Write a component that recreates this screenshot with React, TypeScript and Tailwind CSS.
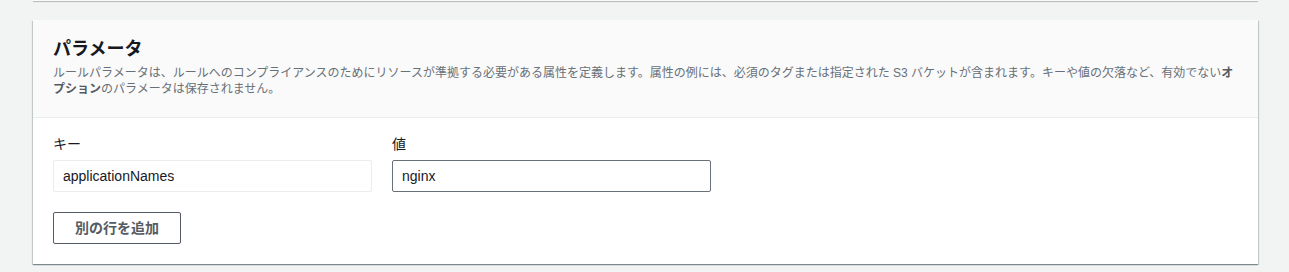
const font = "font-['Liberation_Sans','Noto_Sans_CJK_JP',sans-serif]";

function Field({
  label,
  value,
  strong,
}: {
  label: string;
  value: string;
  strong?: boolean;
}) {
  return (
    <div className="flex w-[319px] flex-col">
      <label className="text-[14px] leading-[22px] text-[#16191f]">{label}</label>
      <input
        readOnly
        value={value}
        className={`mt-[5px] h-8 w-full rounded-[2px] border bg-white px-[9px] text-[14px] text-[#16191f] outline-none ${
          strong ? "border-[#687078]" : "border-[#eaeded]"
        }`}
      />
    </div>
  );
}

export default function App() {
  return (
    <div className={`min-h-[272px] bg-[#f2f3f3] pl-[33px] pr-[31px] ${font}`}>
      <div className="h-px bg-[#fafafa] shadow-[0_1px_1px_0_rgba(0,28,36,0.3)]" />

      <section className="mt-[19px] bg-white shadow-[0_1px_1px_0_rgba(0,28,36,0.3),1px_1px_1px_0_rgba(0,28,36,0.15),-1px_1px_1px_0_rgba(0,28,36,0.15)]">
        <div className="border-b border-[#eaeded] bg-[#fafafa] px-5 pb-5 pt-[18px]">
          <h2 className="text-[18px] font-bold leading-[22px] text-[#16191f]">
            パラメータ
          </h2>
          <p className="mt-[5px] text-[12px] leading-4 text-[#687078]">
            ルールパラメータは、ルールへのコンプライアンスのためにリソースが準拠する必要がある属性を定義します。属性の例には、必須のタグまたは指定された
            S3 バケットが含まれます。キーや値の欠落など、有効でない
            <b className="text-[#545b64]">オプション</b>
            のパラメータは保存されません。
          </p>
        </div>

        <div className="px-5 pb-5 pt-[15px]">
          <div className="flex gap-5">
            <Field label="キー" value="applicationNames" />
            <Field label="値" value="nginx" strong />
          </div>
          <button className="mt-5 h-8 w-32 rounded-[2px] border border-[#545b64] bg-white text-[14px] font-bold text-[#545b64]">
            別の行を追加
          </button>
        </div>
      </section>
    </div>
  );
}
